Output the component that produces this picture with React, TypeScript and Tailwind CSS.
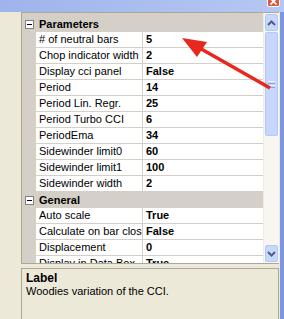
import React from "react";

type Row = { name: string; value: string } | { category: string };

const rows: Row[] = [
  { category: "Parameters" },
  { name: "# of neutral bars", value: "5" },
  { name: "Chop indicator width", value: "2" },
  { name: "Display cci panel", value: "False" },
  { name: "Period", value: "14" },
  { name: "Period Lin. Regr.", value: "25" },
  { name: "Period Turbo CCI", value: "6" },
  { name: "PeriodEma", value: "34" },
  { name: "Sidewinder limit0", value: "60" },
  { name: "Sidewinder limit1", value: "100" },
  { name: "Sidewinder width", value: "2" },
  { category: "General" },
  { name: "Auto scale", value: "True" },
  { name: "Calculate on bar close", value: "False" },
  { name: "Displacement", value: "0" },
  { name: "Display in Data Box", value: "True" },
];

function Chevron({ up }: { up?: boolean }) {
  return (
    <svg width="9" height="6" viewBox="0 0 9 6">
      <path
        d={up ? "M1 5 L4.5 1.5 L8 5" : "M1 1 L4.5 4.5 L8 1"}
        fill="none"
        stroke="#4d6185"
        strokeWidth="2"
      />
    </svg>
  );
}

function ScrollBar() {
  return (
    <div className="w-[16px] flex flex-col bg-[#f7f6f1] border-l border-[#eeede5]">
      <div className="h-[17px] mx-[1px] mt-[1px] rounded-[2px] border border-[#b4c8f6] bg-[#c8d8fb] flex items-center justify-center">
        <Chevron up />
      </div>
      <div className="h-[104px] mx-[1px] mt-[1px] rounded-[2px] border border-[#b4c8f6] bg-[#c6d6fc] flex flex-col items-center justify-center gap-[1px]">
        <div className="w-[7px] h-[1px] bg-[#eef3fe]" />
        <div className="w-[7px] h-[1px] bg-[#8ca4dc]" />
        <div className="w-[7px] h-[1px] bg-[#eef3fe]" />
        <div className="w-[7px] h-[1px] bg-[#8ca4dc]" />
      </div>
      <div className="flex-1" />
      <div className="h-[17px] mx-[1px] mb-[1px] rounded-[2px] border border-[#b4c8f6] bg-[#c8d8fb] flex items-center justify-center">
        <Chevron />
      </div>
    </div>
  );
}

export default function App() {
  return (
    <div
      className="relative w-[284px] h-[319px] overflow-hidden bg-[#ece9d8] flex flex-col text-[11px] text-black"
      style={{ fontFamily: '"Liberation Sans", Arial, sans-serif' }}
    >
      {/* window frame strip */}
      <div className="h-[12px] bg-gradient-to-r from-[#9fb4ec] to-[#b6c7f3] flex justify-end pr-[4px]">
        <div className="w-[13px] h-[9px] -mt-[2px] rounded-b-[2px] bg-[#d9573b] border border-white flex items-end justify-center pb-[1px]">
          <svg width="7" height="5" viewBox="0 0 7 5">
            <path d="M0.5 -1.5 L6.5 4.5 M6.5 -1.5 L0.5 4.5" stroke="white" strokeWidth="1.6" />
          </svg>
        </div>
      </div>

      <div className="flex-1 flex min-h-0">
        <div className="flex-1 flex flex-col pl-[21px] pr-[1px] min-w-0">
          {/* property grid */}
          <div className="h-[252px] flex border border-[#aca899] border-r-0 bg-[#d4d0c8]">
            <div className="flex-1 flex flex-col pt-[3px] overflow-hidden min-w-0">
              {rows.map((r, i) =>
                "category" in r ? (
                  <div key={i} className="h-[16px] shrink-0 flex items-center">
                    <div className="w-[14px] flex justify-center pl-[1px]">
                      <div className="w-[9px] h-[9px] border border-[#7f7f7f] bg-white flex items-center justify-center">
                        <div className="w-[5px] h-[1px] bg-black" />
                      </div>
                    </div>
                    <span className="pl-[3px] font-bold text-[11px] leading-none">{r.category}</span>
                  </div>
                ) : (
                  <div key={i} className="h-[16px] shrink-0 flex">
                    <div className="w-[14px]" />
                    <div className="w-[106px] h-[15px] bg-white pl-[3px] whitespace-nowrap overflow-hidden leading-[15px]">
                      {r.name}
                    </div>
                    <div className="w-[1px]" />
                    <div className="flex-1 h-[15px] bg-white pl-[3px] font-bold whitespace-nowrap overflow-hidden leading-[15px]">
                      {r.value}
                    </div>
                  </div>
                )
              )}
            </div>
            <ScrollBar />
          </div>

          {/* description */}
          <div className="mt-[4px] flex-1 border border-[#aca899] border-b-0 px-[4px] pt-[3px]">
            <div className="font-bold text-[12px] leading-[13px]">Label</div>
            <div className="leading-[13px]">Woodies variation of the CCI.</div>
          </div>
        </div>
        <div className="w-[4px] bg-[#7b97df]" />
      </div>

      {/* red annotation arrow */}
      <svg className="absolute left-0 top-0 pointer-events-none" width="284" height="319">
        <line x1="270" y1="88" x2="196" y2="46" stroke="#e8281e" strokeWidth="3.5" />
        <polygon points="182,38 207,42 197,57" fill="#e8281e" />
      </svg>
    </div>
  );
}
